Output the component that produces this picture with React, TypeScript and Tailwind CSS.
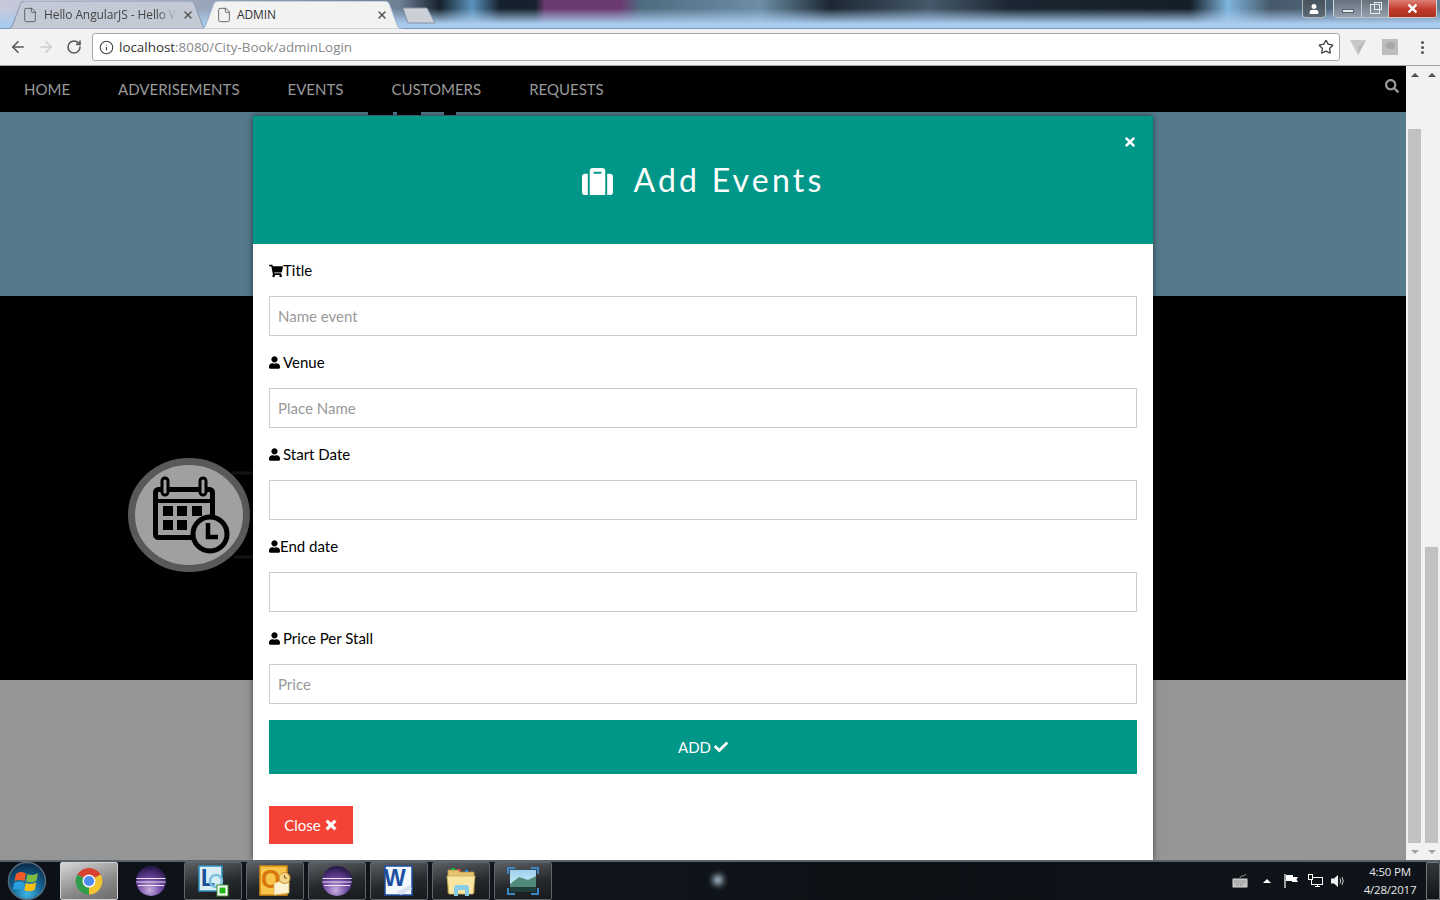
import React from "react";
import { ArrowLeft, ArrowRight, RotateCw, Info, Star, File, X } from "lucide-react";
import { FaShoppingCart, FaUser, FaSuitcase, FaCheck, FaTimes, FaSearch } from "react-icons/fa";

function TabShape({ fill, stroke }: { fill: string; stroke: string }) {
  return (
    <svg className="absolute inset-0 h-full w-full" viewBox="0 0 200 28" preserveAspectRatio="none">
      <path d="M0 28 C4 28 5 26 6 23 L13 4 C14 1 15 0 18 0 L182 0 C185 0 186 1 187 4 L194 23 C195 26 196 28 200 28 Z" fill={fill} stroke={stroke} strokeWidth="1" />
    </svg>
  );
}

function Tab({ title, active }: { title: string; active?: boolean }) {
  return (
    <div className={active ? "relative z-10 -ml-[8px] h-[28px] w-[203px]" : "relative h-[28px] w-[201px]"}>
      <TabShape fill={active ? "#f2f2f2" : "#c3cad5"} stroke={active ? "#9fb3cc" : "#8b9bb0"} />
      <div className={active ? "relative flex h-full items-center pl-[16px] pr-[15px]" : "relative flex h-full items-center pl-[15px] pr-[14px]"}>
        <File size={16} strokeWidth={1.2} className="shrink-0 text-[#4a4d50]" />
        <span className={active
          ? "ml-[5px] w-[140px] overflow-hidden whitespace-nowrap font-['Open_Sans'] text-[12px] tracking-[-0.1px] text-[#333]"
          : "ml-[6px] w-[133px] overflow-hidden whitespace-nowrap font-['Open_Sans'] text-[12px] tracking-[-0.1px] text-[#444] [mask-image:linear-gradient(90deg,#000_85%,transparent)]"}>{title}</span>
        <X size={12} strokeWidth={3} className="ml-auto shrink-0 text-[#555]" />
      </div>
    </div>
  );
}

function WinControls() {
  const base = "flex h-[18px] items-center justify-center border-b border-[#dfe5ea]/70";
  return (
    <div className="-mt-px flex items-start gap-[7px] pr-[3px]">
      <div className={"w-[24px] rounded-b-[4px] border-x border-[#cfd6dc] bg-[linear-gradient(#46525c,#5c6a76)] " + base}>
        <FaUser size={10} className="text-white" />
      </div>
      <div className="flex overflow-hidden rounded-b-[4px] border-x border-[#cfd6dc]">
        <div className={"w-[28px] border-r border-[#aab4bc] bg-[linear-gradient(#66727c,#93a1ad)] " + base}>
          <div className="mt-[4px] h-[4px] w-[12px] border border-[#59636c] bg-[#e8edf0]" />
        </div>
        <div className={"w-[27px] border-r border-[#aab4bc] bg-[linear-gradient(#66727c,#93a1ad)] " + base}>
          <div className="relative h-[10px] w-[10px] border border-[#e8edf0]">
            <div className="absolute -right-[3px] -top-[3px] h-[8px] w-[8px] border border-[#e8edf0]" />
          </div>
        </div>
        <div className={"w-[47px] bg-[linear-gradient(#dc7f76,#c23a2b_55%,#a9331f)] " + base}>
          <FaTimes size={13} className="text-white" />
        </div>
      </div>
    </div>
  );
}

function TitleStrip() {
  return (
    <div className="flex h-[29px] items-start justify-between border-b border-[#7e95b5] bg-[linear-gradient(180deg,rgba(169,203,238,0)_0%,rgba(169,203,238,0)_30%,#a9cbee_85%),linear-gradient(90deg,#c9c9dc_0px,#9aa7bb_200px,#6f8095_400px,#15212c_440px,#5b92bb_472px,#15212c_500px,#15212c_535px,#6b3a70_545px,#6b3a70_620px,#4f6b80_640px,#6d8ea6_760px,#1b2732_830px,#46596a_930px,#1a2631_1010px,#141e28_1190px,#7fb4dc_1228px,#46596a_1270px,#5f7d93_1440px)] pl-[7px] pt-px">
      <div className="flex items-end">
        <Tab title="Hello AngularJS - Hello World" />
        <Tab title="ADMIN" active />
        <svg width="34" height="17" viewBox="0 0 34 17" className="-ml-px mb-[5px]">
          <path d="M1 1 L25 1 L33 16 L6 16 Z" fill="#ccd0d6" stroke="#8195ad" strokeWidth="1" strokeLinejoin="round" />
        </svg>
      </div>
      <WinControls />
    </div>
  );
}

function Toolbar() {
  return (
    <div className="flex h-[37px] items-center border-b border-[#a3a3a3] bg-[#f2f2f2]">
      <div className="flex w-[92px] items-center pl-[9px]">
        <ArrowLeft size={18} strokeWidth={2.2} className="text-[#5a5a5a]" />
        <ArrowRight size={18} strokeWidth={2.2} className="ml-[10px] text-[#cdcdcd]" />
        <RotateCw size={16} strokeWidth={2.4} className="ml-[11px] text-[#5a5a5a]" />
      </div>
      <div className="flex h-[28px] w-[1248px] items-center rounded-[3px] border border-[#a9a9a9] bg-white pl-[6px] pr-[5px]">
        <Info size={15} strokeWidth={1.8} className="text-[#444]" />
        <span className="ml-[5px] pt-px font-['Open_Sans'] text-[13.4px] text-[#333]">localhost<span className="text-[#888]">:8080/City-Book/adminLogin</span></span>
        <Star size={16} strokeWidth={2} className="ml-auto text-[#444]" />
      </div>
      <div className="flex flex-1 items-center pl-[10px]">
        <svg width="16" height="16" viewBox="0 0 16 16"><path d="M0 1 L16 1 L8 16 Z" fill="#c8c8c8" /><path d="M8 8 L16 1 L8 16Z" fill="#b8b8b8" /></svg>
        <div className="ml-[16px] h-[16px] w-[16px] bg-[#bdbdbd]"><div className="mx-auto mt-[3px] h-[7px] w-[9px] rounded-full bg-[#a8a8a8]" /></div>
        <div className="ml-[23px] flex flex-col gap-[2px]">
          <span className="h-[3px] w-[3px] rounded-full bg-[#555]" />
          <span className="h-[3px] w-[3px] rounded-full bg-[#555]" />
          <span className="h-[3px] w-[3px] rounded-full bg-[#555]" />
        </div>
      </div>
    </div>
  );
}

function CalendarBadge() {
  return (
    <svg width="125" height="114" viewBox="0 0 125 114">
      <path d="M104 15 H125 M106 99 H125" stroke="#141414" strokeWidth="3" />
      <ellipse cx="61" cy="57" rx="57.5" ry="53.5" fill="#a0a0a0" stroke="#595959" strokeWidth="7" />
      <rect x="27.5" y="31.5" width="57" height="48" rx="3" fill="none" stroke="#000" strokeWidth="5" />
      <path d="M27 43 H85" stroke="#000" strokeWidth="4" />
      <rect x="34" y="20" width="6" height="17" rx="3" fill="#a0a0a0" stroke="#000" strokeWidth="3" />
      <rect x="72" y="20" width="6" height="17" rx="3" fill="#a0a0a0" stroke="#000" strokeWidth="3" />
      <g fill="#000">
        <rect x="35" y="48" width="10" height="10" />
        <rect x="49" y="48" width="10" height="10" />
        <rect x="64" y="48" width="10" height="10" />
        <rect x="35" y="62" width="10" height="10" />
        <rect x="49" y="62" width="10" height="10" />
      </g>
      <circle cx="82" cy="76" r="17" fill="#a0a0a0" stroke="#000" strokeWidth="5" />
      <path d="M80 65 V79 H90" fill="none" stroke="#000" strokeWidth="4.5" />
    </svg>
  );
}

function Field({ icon, label, placeholder, gap }: { icon: React.ReactNode; label: string; placeholder?: string; gap?: boolean }) {
  return (
    <div className="mb-[15px]">
      <label className="mb-[14px] flex h-[23px] items-center text-[15px] text-black">
        {icon}
        <span className={gap ? "ml-[3px]" : ""}>{label}</span>
      </label>
      <input
        placeholder={placeholder}
        className="block h-[40px] w-full border border-[#ccc] bg-white px-[8px] text-[15px] text-black outline-none placeholder:text-[#999]"
      />
    </div>
  );
}

function Modal() {
  const user = <FaUser className="h-[13px] w-[11px]" />;
  return (
    <div className="absolute left-[253px] top-[50px] w-[900px] bg-white font-['Lato'] shadow-[0_0_6px_rgba(0,0,0,0.55)]">
      <div className="relative flex h-[128px] items-center justify-center bg-[#009688] pl-[1px] text-white">
        <FaSuitcase size={31} className="mt-[2px]" />
        <span className="ml-[20px] text-[32px] font-normal tracking-[3.2px]">Add Events</span>
        <FaTimes size={14} className="absolute right-[16px] top-[19px]" />
      </div>
      <div className="px-[16px] pb-[16px] pt-[15px]">
        <Field icon={<FaShoppingCart size={14} />} label="Title" placeholder="Name event" />
        <Field icon={user} label="Venue" placeholder="Place Name" gap />
        <Field icon={user} label="Start Date" gap />
        <Field icon={user} label="End date" />
        <Field icon={user} label="Price Per Stall" placeholder="Price" gap />
        <button className="mt-[16px] flex h-[54px] w-full items-center justify-center bg-[#009688] text-[15px] text-white">
          ADD<FaCheck size={14} className="ml-[3px]" />
        </button>
        <button className="mt-[32px] flex h-[38px] w-[84px] items-center justify-center bg-[#f44336] text-[15px] text-white">
          Close<FaTimes size={14} stroke="currentColor" strokeWidth={30} className="ml-[3px]" />
        </button>
      </div>
    </div>
  );
}

function Page() {
  const items = ["HOME", "ADVERISEMENTS", "EVENTS", "CUSTOMERS", "REQUESTS"];
  return (
    <div className="relative flex w-[1406px] flex-col overflow-hidden">
      <nav className="flex h-[46px] items-center justify-between bg-black pr-[7px] font-['Lato'] text-[15px] text-[#999]">
        <div className="flex pt-[1px]">
          {items.map((t) => (
            <span key={t} className="px-[24px]">{t}</span>
          ))}
        </div>
        <FaSearch size={14} className="-mt-[6px]" />
      </nav>
      <section className="h-[184px] bg-[#547a8c]">
        <div className="ml-[368px] flex h-[3px] w-[88px] gap-[4px]">
          <div className="w-[26px] bg-black" />
          <div className="w-[25px] bg-black" />
          <div className="ml-[19px] w-[13px] bg-black" />
        </div>
      </section>
      <section className="h-[384px] bg-black pl-[128px] pt-[162px]">
        <CalendarBadge />
      </section>
      <section className="flex-1 bg-[#959595]" />
      <Modal />
    </div>
  );
}

function Scrollbar({ top }: { top: number }) {
  return (
    <div className="flex w-[17px] flex-col items-center bg-[#f1f1f1]">
      <div className="flex h-[17px] items-center justify-center">
        <div className="h-0 w-0 border-x-[4px] border-b-[4px] border-x-transparent border-b-[#505050]" />
      </div>
      <div className="w-full flex-1 px-[2px]">
        <div className="h-full bg-[#c1c1c1]" style={{ marginTop: top, height: `calc(100% - ${top}px)` }} />
      </div>
      <div className="flex h-[17px] items-center justify-center">
        <div className="h-0 w-0 border-x-[4px] border-t-[4px] border-x-transparent border-t-[#a3a3a3]" />
      </div>
    </div>
  );
}

function Orb() {
  return (
    <svg width="40" height="40" viewBox="0 0 40 40">
      <defs>
        <radialGradient id="orb" cx="50%" cy="85%" r="80%"><stop offset="0" stopColor="#3fb4e8" /><stop offset="0.55" stopColor="#14608f" /><stop offset="1" stopColor="#0a2f4c" /></radialGradient>
      </defs>
      <circle cx="20" cy="20" r="18.5" fill="url(#orb)" stroke="#55697a" strokeWidth="1.5" />
      <path d="M9 13 C13 10 16 11 19 12.5 L17.5 20 C14 18.5 11 18.5 7.5 20 Z" fill="#f0592a" />
      <path d="M20.5 13 C23.5 14.5 27 14.5 31 12 L29.5 19.5 C26 22 22.5 21.5 19 20 Z" fill="#80bb41" />
      <path d="M7.2 21.5 C11 20 14 20 17.2 21.5 L15.8 29 C12.5 27.5 9.5 27.5 5.8 29 Z" fill="#2a9fe0" />
      <path d="M18.7 22 C22 23.3 25.5 23.5 29.2 21 L27.8 28.5 C24 31 20.5 30.5 17.3 29.3 Z" fill="#fbc00f" />
    </svg>
  );
}

function ChromeIcon() {
  return (
    <svg width="30" height="30" viewBox="0 0 32 32">
      <path d="M16 16 L3.6 9 A14.5 14.5 0 0 1 28.4 9 Z" fill="#d8402f" />
      <path d="M16 16 L28.4 9 A14.5 14.5 0 0 1 16 30.5 Z" fill="#f4c531" />
      <path d="M16 16 L16 30.5 A14.5 14.5 0 0 1 3.6 9 Z" fill="#2f9d4c" />
      <circle cx="16" cy="16" r="7" fill="#f2f2f2" />
      <circle cx="16" cy="16" r="5.4" fill="#4c8bf0" />
    </svg>
  );
}

function EclipseIcon() {
  return (
    <svg width="32" height="32" viewBox="0 0 32 32">
      <defs>
        <radialGradient id="ecl" cx="45%" cy="80%" r="75%"><stop offset="0" stopColor="#c9aee0" /><stop offset="0.55" stopColor="#6a45a0" /><stop offset="1" stopColor="#2b1a4c" /></radialGradient>
      </defs>
      <circle cx="16" cy="16" r="15" fill="url(#ecl)" />
      <path d="M1.5 13.5 H30.5 M1.5 17 H30.5 M3 20.5 H29" stroke="#efe6f6" strokeWidth="1.2" />
    </svg>
  );
}

function LyncIcon() {
  return (
    <svg width="34" height="34" viewBox="0 0 34 34">
      <path d="M3 2 H26 V27 H3 Z" fill="#d8edf6" stroke="#2f8fc0" strokeWidth="1.5" />
      <text x="5" y="22" fontFamily="Liberation Sans, sans-serif" fontWeight="700" fontSize="23" fill="#1c4f96">L</text>
      <circle cx="20" cy="17" r="6" fill="none" stroke="#7cc0dc" strokeWidth="2.5" />
      <rect x="21" y="21" width="11" height="11" fill="#fff" stroke="#3c8f2c" strokeWidth="1" />
      <rect x="23.5" y="23.5" width="6" height="6" fill="#22b814" />
    </svg>
  );
}

function OutlookIcon() {
  return (
    <svg width="32" height="32" viewBox="0 0 32 32">
      <rect x="1" y="1" width="27" height="29" fill="#f7c64a" stroke="#d88a12" strokeWidth="1.5" />
      <text x="2" y="23" fontFamily="Liberation Sans, sans-serif" fontWeight="700" fontSize="25" fill="#d8760c">O</text>
      <path d="M15 18 L30 14 V28 L15 30 Z" fill="#fdf3d2" stroke="#d9b060" strokeWidth="0.8" />
      <circle cx="25.5" cy="13" r="5.5" fill="#f6d68a" stroke="#c98c2a" strokeWidth="1" />
      <path d="M25.5 10 V13 H28" fill="none" stroke="#8a5b1a" strokeWidth="1" />
    </svg>
  );
}

function WordIcon() {
  return (
    <svg width="32" height="32" viewBox="0 0 32 32">
      <rect x="2" y="1" width="27" height="29" fill="#f5f8fd" stroke="#1c4fa0" strokeWidth="1.5" />
      <text x="1" y="21" fontFamily="Liberation Sans, sans-serif" fontWeight="700" fontSize="23" fill="#1c4fa0">W</text>
      <path d="M14 27 L27 20 L29 24 L18 30 Z" fill="#d9e3f2" />
    </svg>
  );
}

function FolderIcon() {
  return (
    <svg width="32" height="32" viewBox="0 0 32 32">
      <path d="M3 5 H13 L15 7 H29 V28 H3 Z" fill="#e4c46c" stroke="#b5943f" strokeWidth="0.8" />
      <rect x="6" y="3" width="4" height="2" fill="#1fae3b" />
      <rect x="13" y="4" width="3" height="2" fill="#d94a3a" />
      <rect x="20" y="5" width="3" height="2" fill="#2a8fe0" />
      <path d="M2 11 H30 L28 29 H4 Z" fill="#f9e6a2" stroke="#cdaf5c" strokeWidth="0.8" />
      <path d="M9 31 V23 Q9 20 12 20 H21 Q24 20 24 23 V31 H20 V25 H13 V31 Z" fill="#88cde8" />
    </svg>
  );
}

function PhotoIcon() {
  return (
    <svg width="32" height="28" viewBox="0 0 32 28">
      <defs>
        <linearGradient id="sky" x1="0" y1="0" x2="0" y2="1"><stop offset="0" stopColor="#9bd2ef" /><stop offset="1" stopColor="#e6f3f8" /></linearGradient>
      </defs>
      <rect x="3" y="3" width="26" height="22" fill="url(#sky)" />
      <path d="M3 17 L12 10 L21 13 L29 9 V21 H3 Z" fill="#4f8a7a" />
      <path d="M3 20 H29 V25 H3 Z" fill="#1f3f3c" />
      <path d="M1 7 V1 H8 M24 1 H31 V7 M31 21 V27 H24 M8 27 H1 V21" fill="none" stroke="#3c86c4" strokeWidth="2" />
    </svg>
  );
}

function TaskButton({ children, active }: { children: React.ReactNode; active?: boolean }) {
  return (
    <div className={active
      ? "flex h-[38px] w-[58px] items-center justify-center rounded-[2px] border border-[#d0d0d0] bg-[linear-gradient(160deg,#d6d6d6,#8a8a8a_60%,#6a6a6a)]"
      : "flex h-[38px] w-[58px] items-center justify-center rounded-[2px] border border-[#5f6468] bg-[linear-gradient(170deg,#5b5f63,#26292c_55%,#17191c)]"}>
      {children}
    </div>
  );
}

function Tray() {
  return (
    <div className="ml-auto flex h-full items-center text-[#e8e8e8]">
      <svg width="16" height="14" viewBox="0 0 16 14" className="mr-[15px]">
        <path d="M8 4 C8 1 12 3 14 0" fill="none" stroke="#9a9a9a" strokeWidth="1" />
        <rect x="0.5" y="4.5" width="15" height="9" rx="1" fill="#c8c8c8" stroke="#777" />
        <path d="M2.5 7 H13.5 M2.5 9 H13.5 M4 11 H12" stroke="#666" strokeWidth="1" strokeDasharray="1 1" />
      </svg>
      <div className="mr-[13px] h-0 w-0 border-x-[4px] border-b-[4px] border-x-transparent border-b-white" />
      <svg width="15" height="14" viewBox="0 0 15 14" className="mr-[9px]">
        <path d="M1 0 V14" stroke="#fff" strokeWidth="1.2" /><path d="M2 1 H9 V3 H14 L12.5 5.5 L14 8 H8 V7 H2 Z" fill="#fff" />
      </svg>
      <svg width="15" height="14" viewBox="0 0 15 14" className="mr-[8px]">
        <rect x="3.5" y="3.5" width="11" height="7" fill="none" stroke="#fff" /><path d="M7 12.5 H12 M9.5 10.5 V12.5" stroke="#fff" /><rect x="0.5" y="0.5" width="4" height="5" fill="#111" stroke="#fff" />
      </svg>
      <svg width="15" height="14" viewBox="0 0 15 14" className="mr-[14px]">
        <path d="M0 4.5 H3 L7 1 V13 L3 9.5 H0 Z" fill="#eee" /><path d="M9 4.5 Q10.5 7 9 9.5 M11 3 Q13.5 7 11 11" fill="none" stroke="#ccc" />
      </svg>
      <div className="mr-[6px] w-[60px] text-center font-['Open_Sans'] text-[11.5px] leading-[18px] tracking-[-0.2px]">
        <div>4:50 PM</div>
        <div>4/28/2017</div>
      </div>
      <div className="h-[38px] w-[14px] rounded-[1px] border border-[#70767a] bg-[linear-gradient(#33383c,#111416)]" />
    </div>
  );
}

function Taskbar() {
  return (
    <div className="relative flex h-[40px] items-center overflow-hidden border-t-2 border-[#59636b] bg-[linear-gradient(90deg,#0b1116,#10161b_40%,#0c1116_60%,#0f141a)] pl-[7px]">
      <div className="absolute left-[713px] top-[13px] h-[10px] w-[10px] rounded-full bg-[#c0d8ea] blur-[3px]" />
      <div className="relative mr-[13px] w-[40px]"><Orb /></div>
      <div className="relative flex flex-1 items-center gap-[4px]">
        <TaskButton active><ChromeIcon /></TaskButton>
        <div className="flex h-[38px] w-[58px] items-center justify-center"><EclipseIcon /></div>
        <TaskButton><LyncIcon /></TaskButton>
        <TaskButton><OutlookIcon /></TaskButton>
        <TaskButton><EclipseIcon /></TaskButton>
        <TaskButton><WordIcon /></TaskButton>
        <TaskButton><FolderIcon /></TaskButton>
        <TaskButton><PhotoIcon /></TaskButton>
        <Tray />
      </div>
    </div>
  );
}

export default function App() {
  return (
    <div className="flex h-[900px] w-[1440px] flex-col overflow-hidden bg-black">
      <TitleStrip />
      <Toolbar />
      <div className="flex h-[794px]">
        <Page />
        <Scrollbar top={46} />
        <Scrollbar top={464} />
      </div>
      <Taskbar />
    </div>
  );
}
